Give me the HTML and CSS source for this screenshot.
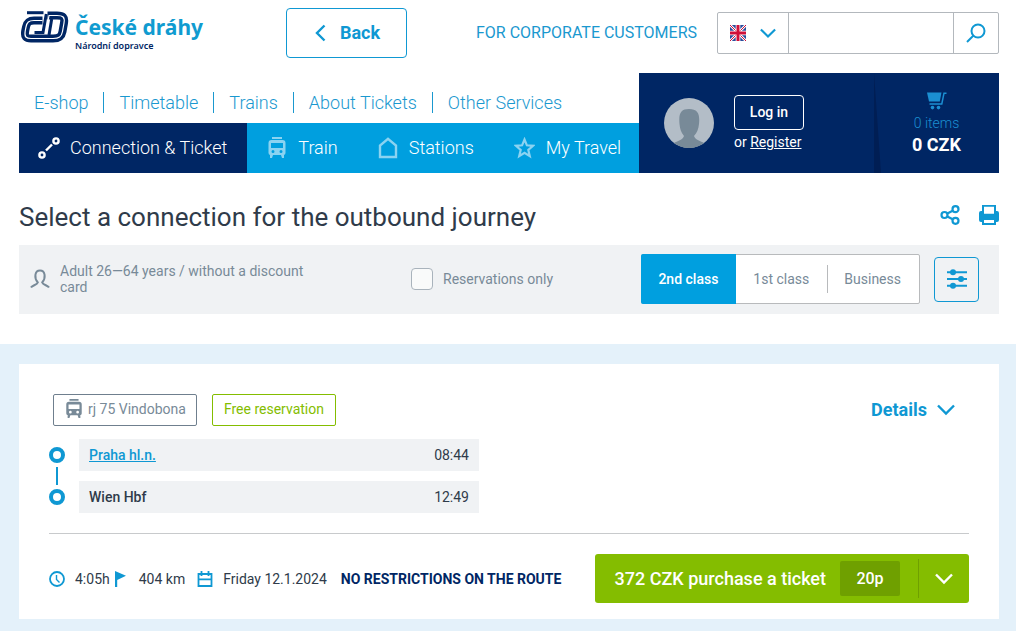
FILE: index.html
```html
<!DOCTYPE html>
<html lang="en">
<head>
	<meta charset="UTF-8">
	<meta name="viewport" content="width=device-width, initial-scale=1.0">
	<title>České dráhy</title>
	<link rel="stylesheet" href="styles.css">
</head>

<body>
	<svg class="sprite" aria-hidden="true">
		<symbol id="train" viewBox="0 0 18 22">
			<path d="M4 0h10v2H4zM3.500 3h11a3 3 0 0 1 3 3v10a2 2 0 0 1-2 2h-13a2 2 0 0 1-2-2V6a3 3 0 0 1 3-3zM3 6v5h12V6zM5 13a1.500 1.500 0 1 0 0 3 1.500 1.500 0 0 0 0-3zM13 13a1.500 1.500 0 1 0 0 3 1.500 1.500 0 0 0 0-3zM2 18h3l-1 3H2zM13 18h3v3h-2z" fill="currentColor" fill-rule="evenodd"/>
		</symbol>
		<symbol id="down" viewBox="0 0 18 12">
			<path d="M1 1.500 9 9.500l8-8" fill="none" stroke="currentColor" stroke-width="2.400"/>
		</symbol>
	</svg>

	<header class="container">
		<div class="top">
			<a class="logo" href="#">
				<svg width="49" height="33" viewBox="0 0 49 33" fill="none" stroke="#002664">
					<path d="M7 1.700H23.500" stroke-width="3"/>
					<path d="M22.500 9.500H14C8.500 9.500 7 11.500 6 16L5.200 20C4.200 26 6 27.500 11 27.500H33C39 27.500 41.500 26 42.500 20.500L44 12C45 6 43 4.500 37 4.500H27.500" stroke-width="8"/>
					<path d="M26.300 3L23 21.500H14.500" stroke-width="3"/>
					<path d="M31.700 8L29 24" stroke-width="3"/>
					<path d="M22.500 9.500H14C8.500 9.500 7 11.500 6 16L5.200 20C4.200 26 6 27.500 11 27.500H33C39 27.500 41.500 26 42.500 20.500L44 12C45 6 43 4.500 37 4.500H29L26 22" stroke="#fff" stroke-width="1.200"/>
				</svg>
				<span class="logo-text">
					<span class="logo-name">České dráhy</span>
					<span class="logo-sub">Národní dopravce</span>
				</span>
			</a>
			<button class="back" type="button">
				<svg width="11" height="18" viewBox="0 0 11 18"><path d="M9.500 1.500 2 9l7.500 7.500" fill="none" stroke="currentColor" stroke-width="2.400"/></svg>
				Back
			</button>
			<a class="corporate" href="#">FOR CORPORATE CUSTOMERS</a>
			<form class="search">
				<div class="lang">
					<svg width="16" height="16" viewBox="0 0 16 16">
						<path d="M0 0h16v16H0z" fill="#2b4c9b"/>
						<path d="M0 0l16 16M16 0L0 16" stroke="#fff" stroke-width="2.600"/>
						<path d="M0 0l16 16M16 0L0 16" stroke="#d0103a" stroke-width="1"/>
						<path d="M8 0v16M0 8h16" stroke="#fff" stroke-width="4.600"/>
						<path d="M8 0v16M0 8h16" stroke="#d0103a" stroke-width="3"/>
					</svg>
					<svg class="blue" width="16" height="11"><use href="#down"/></svg>
					<select aria-label="Language"><option>EN</option></select>
				</div>
				<input type="search" aria-label="Search">
				<button class="search-btn" type="submit" aria-label="Search">
					<svg width="20" height="20" viewBox="0 0 20 20" fill="none" stroke="currentColor" stroke-width="2"><circle cx="12" cy="8" r="6.500"/><path d="M7.500 12.500 1 19"/></svg>
				</button>
			</form>
		</div>

		<div class="bar">
			<div class="menus">
				<nav class="links">
					<a href="#">E-shop</a>
					<a href="#">Timetable</a>
					<a href="#">Trains</a>
					<a href="#">About Tickets</a>
					<a href="#">Other Services</a>
				</nav>
				<nav class="tabs">
					<a class="active" href="#">
						<svg width="22" height="22" viewBox="0 0 22 22" fill="none" stroke="#fff"><circle cx="4" cy="18" r="2.600" stroke-width="2.400"/><circle cx="18" cy="4" r="2.600" stroke-width="2.400"/><path d="M8 13.500l6-6" stroke-width="2.400"/></svg>
						Connection &amp; Ticket
					</a>
					<a href="#"><svg width="20" height="22"><use href="#train"/></svg>Train</a>
					<a href="#">
						<svg width="20" height="22" viewBox="0 0 20 22" fill="none" stroke="currentColor" stroke-width="2.400"><path d="M2 20V8.500L10 1.800l8 6.700V20z"/></svg>
						Stations
					</a>
					<a href="#">
						<svg width="21" height="22" viewBox="0 0 21 22" fill="none" stroke="currentColor" stroke-width="2.200"><path d="M10.500 2.500l2.400 5.800 6.200.5-4.800 4.100 1.500 6.300-5.300-3.400-5.300 3.400 1.500-6.300-4.800-4.100 6.200-.5z"/></svg>
						My Travel
					</a>
				</nav>
			</div>
			<div class="user">
				<svg width="50" height="50" viewBox="0 0 50 50">
					<circle cx="25" cy="25" r="25" fill="#b3bdc7"/>
					<path d="M10 45C13 43 19 42 20 38C17 34 16 31 15.500 26C14.500 15 17 11 25 11C34 11 36 16 35 26C34.500 31 33 35 30 38C31 42 37 43 40 45A25 25 0 0 1 10 45z" fill="#788a98"/>
				</svg>
				<div class="login">
					<button type="button">Log in</button>
					<p>or <a href="#">Register</a></p>
				</div>
			</div>
			<div class="cart">
				<svg width="20" height="18" viewBox="0 0 20 18"><path d="M0 0.500h14.500l-1.700 9H2z" fill="currentColor"/><path d="M19.500 1.200H17L14.800 12H2.500" fill="none" stroke="currentColor" stroke-width="1.500"/><circle cx="5.500" cy="15.600" r="1.800" fill="currentColor"/><circle cx="11.500" cy="15.600" r="1.800" fill="currentColor"/></svg>
				<span>0 items</span>
				<strong>0 CZK</strong>
			</div>
		</div>
	</header>

	<main>
		<section class="container">
			<div class="title">
				<h1>Select a connection for the outbound journey</h1>
				<a href="#" aria-label="Share">
					<svg width="20" height="20" viewBox="0 0 20 20" fill="none" stroke="currentColor" stroke-width="2.200"><circle cx="4.500" cy="10" r="3"/><circle cx="15.500" cy="4.200" r="3"/><circle cx="15.500" cy="15.800" r="3"/><path d="M7.300 8.500l5.400-2.800M7.300 11.500l5.400 2.800"/></svg>
				</a>
				<a href="#" aria-label="Print">
					<svg width="20" height="20" viewBox="0 0 20 20" fill="currentColor"><path d="M3 0h14v6h1a2 2 0 0 1 2 2v7a2 2 0 0 1-2 2h-1v3H3v-3H2a2 2 0 0 1-2-2V8a2 2 0 0 1 2-2h1zM5 1.800v7h10v-7zM5 15v3h10v-3z" fill-rule="evenodd"/></svg>
				</a>
			</div>
			<form class="filter">
				<div class="passenger">
					<svg width="20" height="20" viewBox="0 0 20 20" fill="none" stroke="currentColor" stroke-width="2"><path d="M1 18.500C2 16.500 7 15.800 7.800 13.500C4 9 4.500 1.500 10 1.500S16 9 12.200 13.500C13 15.800 18 16.500 19 18.500"/></svg>
					<span>Adult 26—64 years / without a discount card</span>
				</div>
				<label class="check"><input type="checkbox">Reservations only</label>
				<div class="classes">
					<label><input type="radio" name="class" checked><span>2nd class</span></label>
					<label><input type="radio" name="class"><span>1st class</span></label>
					<label><input type="radio" name="class"><span>Business</span></label>
				</div>
				<button class="settings" type="button" aria-label="Filter settings">
					<svg width="20" height="20" viewBox="0 0 20 20" fill="currentColor"><path d="M0 3.300h20M0 10h20M0 16.700h20" stroke="currentColor" stroke-width="2"/><circle cx="6" cy="3.300" r="3"/><circle cx="14" cy="10" r="3"/><circle cx="6" cy="16.700" r="3"/></svg>
				</button>
			</form>
		</section>

		<section class="results">
			<article class="card">
				<div class="card-head">
					<span class="tag"><svg width="18" height="20"><use href="#train"/></svg>rj 75 Vindobona</span>
					<span class="tag green">Free reservation</span>
					<a class="details" href="#">Details <svg width="18" height="12"><use href="#down"/></svg></a>
				</div>
				<ul class="route">
					<li><i class="dot"></i><div class="stop"><a href="#">Praha hl.n.</a><time>08:44</time></div></li>
					<li><i class="dot"></i><div class="stop"><b>Wien Hbf</b><time>12:49</time></div></li>
				</ul>
				<div class="card-foot">
					<span class="info time">
						<svg width="16" height="16" viewBox="0 0 16 16" fill="none" stroke="currentColor"><circle cx="8" cy="8" r="7" stroke-width="1.800"/><path d="M7.500 4v4.500l3 3" stroke-width="1.400"/></svg>
						4:05h
					</span>
					<span class="info km">
						<svg width="14" height="16" viewBox="0 0 14 16" fill="currentColor"><path d="M0 0l11 4.700L2.200 9v7H0z"/></svg>
						404 km
					</span>
					<span class="info">
						<svg width="16" height="16" viewBox="0 0 16 16" fill="none" stroke="currentColor" stroke-width="1.800"><path d="M1.500 3h13v12h-13zM1.500 8.300h13M4.500 0v5M11.500 0v5"/></svg>
						Friday 12.1.2024
					</span>
					<strong>NO RESTRICTIONS ON THE ROUTE</strong>
					<div class="buy">
						<button class="buy-main" type="button">372 CZK purchase a ticket <span>20p</span></button>
						<button class="buy-more" type="button" aria-label="More options"><svg width="18" height="12"><use href="#down"/></svg></button>
					</div>
				</div>
			</article>
		</section>
	</main>
</body>
</html>
```

FILE: styles.css
```css
* {
  box-sizing: border-box;
}

body {
  font-family: Roboto, "Liberation Sans", sans-serif;
  font-size: 14px;
  line-height: 16px;
  color: #2f3b4a;
  margin: 0;
  background: #fff;
}

a {
  color: #009fda;
}

button,
input,
select {
  font: inherit;
  margin: 0;
}

button {
  display: flex;
  align-items: center;
  justify-content: center;
  padding: 0;
  border: 0;
  background: none;
  color: #0f98d3;
  cursor: pointer;
}

svg {
  display: block;
  flex: none;
}

.sprite {
  position: absolute;
  width: 0;
  height: 0;
}

.container {
  padding: 0 17px 0 19px;
}

.blue {
  color: #0f98d3;
}

/* top row */
.top {
  display: flex;
  align-items: flex-start;
  height: 73px;
  padding-top: 8px;
}

.logo {
  display: flex;
  gap: 6px;
  width: 267px;
  padding: 3px 0 0 1px;
  text-decoration: none;
}

.logo-text {
  display: flex;
  flex-direction: column;
  padding-top: 2px;
  font-family: "Noto Sans", sans-serif;
}

.logo-name {
  font-size: 21px;
  line-height: 28px;
  font-weight: 700;
  color: #109bd0;
}

.logo-sub {
  font-size: 9px;
  line-height: 10px;
  font-weight: 600;
  color: #002664;
}

.back {
  width: 121px;
  height: 50px;
  gap: 14px;
  padding-left: 2px;
  border: 1px solid #0f98d3;
  border-radius: 4px;
  font-size: 18px;
  font-weight: 700;
}

.corporate {
  margin-left: auto;
  font-size: 16px;
  line-height: 50px;
  color: #1a98cf;
  text-decoration: none;
}

.search {
  display: flex;
  width: 282px;
  height: 42px;
  margin: 4px 0 0 20px;
  border: 1px solid #b3b8bd;
  border-radius: 2px;
}

.lang {
  position: relative;
  display: flex;
  align-items: center;
  gap: 14px;
  width: 71px;
  padding-left: 12px;
  border-right: 1px solid #b3b8bd;
}

.lang select {
  position: absolute;
  inset: 0;
  width: 100%;
  border: 0;
  opacity: 0;
}

.search input {
  flex: 1;
  min-width: 0;
  border: 0;
  background: none;
}

.search-btn {
  width: 45px;
  border-left: 1px solid #b3b8bd;
}

/* navigation */
.bar {
  display: flex;
  height: 100px;
}

.menus {
  flex: 1;
}

.links {
  display: flex;
  align-items: center;
  height: 50px;
  padding-top: 9px;
}

.links a {
  padding: 0 15px;
  font-size: 18px;
  line-height: 21px;
  font-weight: 300;
  color: #1a98cf;
  text-decoration: none;
}

.links a + a {
  border-left: 1px solid #1a98cf;
}

.tabs {
  display: flex;
  height: 50px;
  background: #009fdf;
}

.tabs a {
  display: flex;
  align-items: center;
  gap: 11px;
  padding: 0 20px;
  font-size: 18px;
  font-weight: 300;
  color: #fff;
  text-decoration: none;
  white-space: nowrap;
}

.tabs svg {
  color: #8bd3f1;
}

.tabs .active {
  gap: 10px;
  padding: 0 20px 0 19px;
  background: #002664;
}

.tabs a:last-child {
  padding-right: 0;
}

.user {
  display: flex;
  align-items: center;
  gap: 20px;
  width: 235px;
  padding-left: 25px;
  background: #002664;
  color: #fff;
}

.login button {
  width: 70px;
  height: 35px;
  border: 1px solid #fff;
  border-radius: 4px;
  color: #fff;
  font-weight: 500;
}

.login p {
  margin: 4px 0 2px;
}

.login a {
  color: #fff;
}

.cart {
  position: relative;
  display: flex;
  flex-direction: column;
  align-items: center;
  width: 125px;
  padding-top: 19px;
  background: #002664;
  color: #1b8fd2;
}

.cart::before {
  content: "";
  position: absolute;
  left: 0;
  top: 0;
  bottom: 0;
  width: 7px;
  background: #001e54;
  clip-path: polygon(0 0, 100% 100%, 0 100%);
}

.cart span {
  margin-top: 5px;
  font-weight: 300;
}

.cart strong {
  margin-top: 3px;
  font-size: 18px;
  line-height: 22px;
  color: #fff;
}

/* title and filter */
.title {
  display: flex;
  align-items: center;
  gap: 19px;
  height: 72px;
  padding-top: 14px;
}

.title h1 {
  flex: 1;
  margin: 0;
  padding-top: 2px;
  font-size: 26px;
  line-height: 30px;
  font-weight: 400;
}

.title a {
  padding-bottom: 3px;
  color: #0f98d3;
}

.filter {
  display: flex;
  align-items: center;
  padding: 9px 20px 10px 11px;
  background: #f0f2f4;
  color: #788a98;
}

.passenger {
  display: flex;
  align-items: center;
  gap: 10px;
  width: 281px;
}

.check {
  display: flex;
  align-items: center;
  gap: 10px;
  margin-left: 100px;
}

.check input {
  appearance: none;
  width: 22px;
  height: 22px;
  border: 1px solid #a9b3bc;
  border-radius: 4px;
  background: #f9fafa;
}

.classes {
  display: flex;
  height: 50px;
  margin-left: auto;
  border: 1px solid #b8babc;
  border-radius: 2px;
  background: #fff;
}

.classes label {
  position: relative;
  display: flex;
  align-items: center;
}

.classes input {
  position: absolute;
  inset: 0;
  opacity: 0;
}

.classes span {
  padding: 0 18px 0 17px;
  line-height: 28px;
}

.classes label:last-child span {
  padding-left: 16px;
  border-left: 1px solid #b8babc;
}

.classes input:checked + span {
  margin: -1px 0 -1px -1px;
  border-radius: 2px 0 0 2px;
  background: #009fdf;
  color: #fff;
  font-weight: 500;
  line-height: 50px;
}

.settings {
  width: 45px;
  height: 45px;
  margin-left: 14px;
  border: 1px solid #0f98d3;
  border-radius: 4px;
}

/* results */
.results {
  margin-top: 30px;
  padding: 20px 17px 12px 19px;
  background: #e4f1fa;
}

.card {
  padding: 30px 30px 16px;
  background: #fff;
}

.card-head {
  display: flex;
  align-items: flex-start;
  gap: 15px;
  padding-left: 4px;
}

.tag {
  display: flex;
  align-items: center;
  gap: 5px;
  height: 32px;
  padding: 0 10px 2px 11px;
  border: 1px solid #6f7f8e;
  border-radius: 2px;
  color: #788a98;
}

.green {
  padding: 0 11px 2px;
  border-color: #84bd00;
  color: #84bd00;
}

.details {
  display: flex;
  align-items: center;
  gap: 10px;
  height: 32px;
  margin: 0 14px 0 auto;
  font-size: 18px;
  font-weight: 700;
  color: #0f98d3;
  text-decoration: none;
}

.route {
  display: flex;
  flex-direction: column;
  gap: 10px;
  margin: 13px 0 20px;
  padding: 0;
  list-style: none;
}

.route li {
  position: relative;
  display: flex;
  align-items: center;
  gap: 14px;
}

.route li + li::before {
  content: "";
  position: absolute;
  left: 7px;
  top: -14px;
  width: 2px;
  height: 18px;
  background: #0f98d3;
}

.dot {
  width: 16px;
  height: 16px;
  border: 4px solid #0f98d3;
  border-radius: 50%;
}

.stop {
  display: flex;
  justify-content: space-between;
  width: 400px;
  padding: 8px 10px;
  background: #f0f2f4;
}

.stop a,
.stop b {
  font-weight: 500;
}

.stop a {
  color: #0f98d3;
}

.card-foot {
  display: flex;
  align-items: center;
  padding-top: 20px;
  border-top: 1px solid #c8cacc;
}

.info {
  display: flex;
  align-items: center;
  gap: 10px;
  margin-right: 14px;
}

.info.time {
  margin-right: 5px;
}

.info.km {
  margin-right: 12px;
}

.info svg {
  color: #0f98d3;
}

.card-foot strong {
  color: #002664;
}

.buy {
  display: flex;
  align-items: center;
  height: 49px;
  margin-left: auto;
  border-radius: 3px;
  background: #84bd00;
}

.buy-main {
  gap: 14px;
  padding: 0 18px 0 20px;
  font-size: 18px;
  font-weight: 500;
  color: #fff;
}

.buy-main span {
  width: 60px;
  font-size: 16px;
  line-height: 35px;
  border-radius: 2px;
  background: #6fa000;
}

.buy-more {
  width: 51px;
  height: 39px;
  border-left: 1px solid #6fa000;
  color: #fff;
}
```
